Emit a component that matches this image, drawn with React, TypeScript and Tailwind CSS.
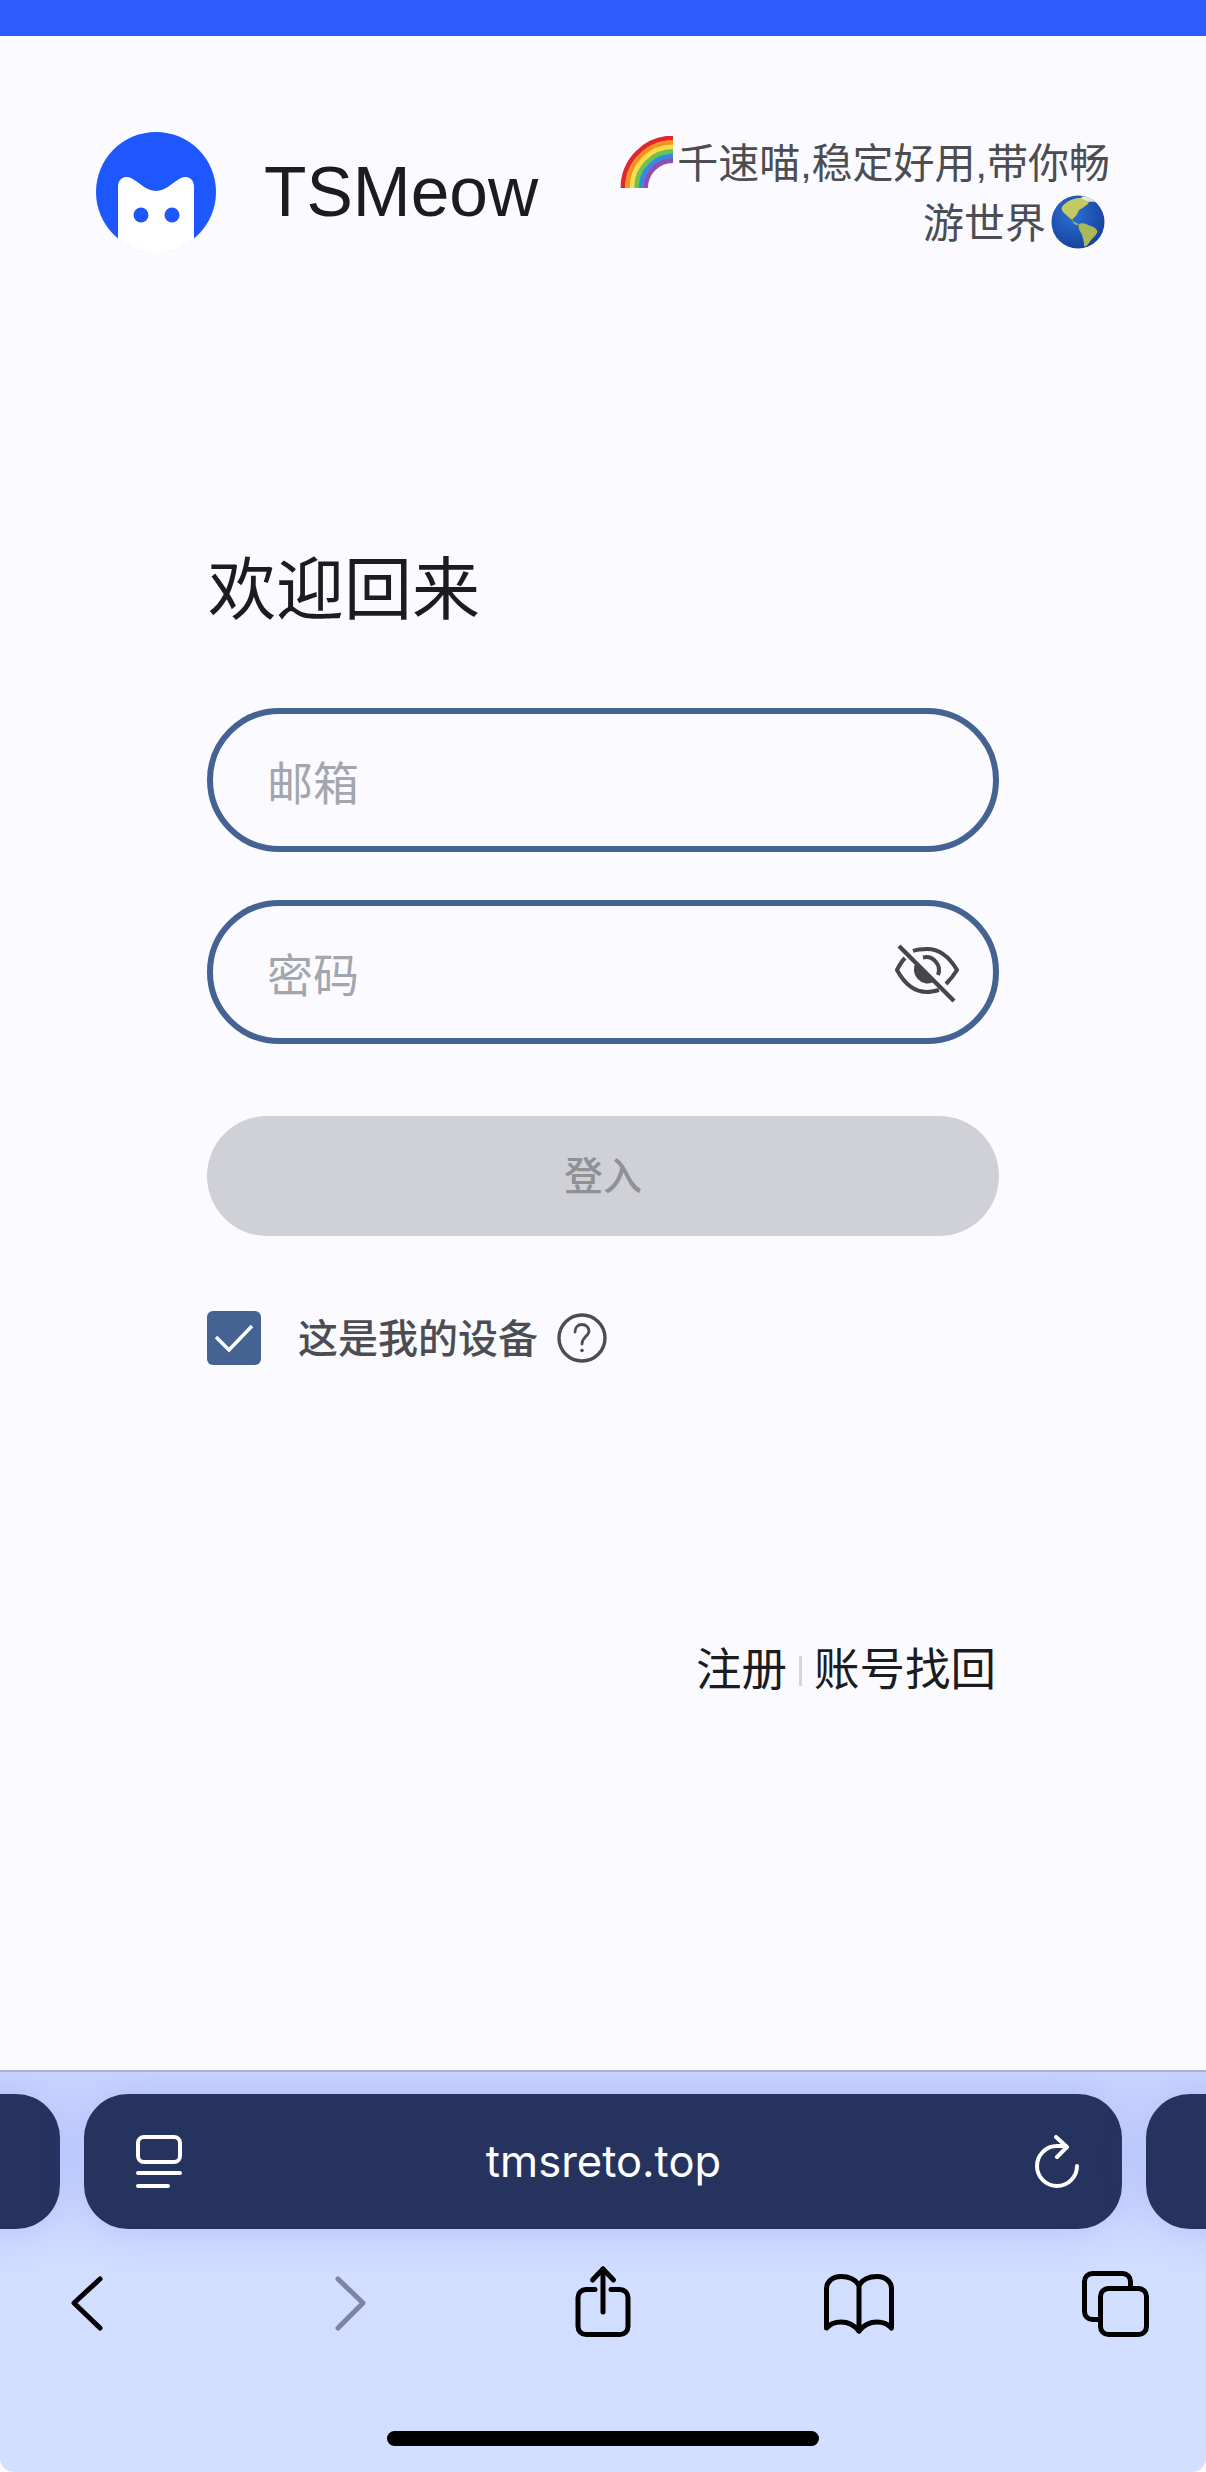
import type { ReactNode } from "react";

const rainbowBands = [
    { r: 50, color: "#e3262e" },
    { r: 45.5, color: "#f6921e" },
    { r: 41, color: "#fbdc4a" },
    { r: 36.5, color: "#6fc34c" },
    { r: 32, color: "#2f8fdc" },
    { r: 27.5, color: "#8b50b8" },
];

function Logo() {
    return (
        <svg width="120" height="120" viewBox="0 0 120 120" className="shrink-0">
            <defs>
                <clipPath id="logo-clip">
                    <circle cx="60" cy="60" r="60.6" />
                </clipPath>
            </defs>
            <circle cx="60" cy="60" r="60" fill="#1f57ff" />
            <path
                clipPath="url(#logo-clip)"
                fill="#fff"
                d="M22 121 V55 C22 47 28 43 35 46 C43 50 50 59 60 59 C70 59 77 50 85 46 C92 43 98 47 98 55 V121 Z"
            />
            <circle cx="45" cy="83" r="7.5" fill="#1f57ff" />
            <circle cx="76" cy="83" r="7.5" fill="#1f57ff" />
        </svg>
    );
}

function Rainbow() {
    return (
        <svg width="54" height="52" viewBox="0 0 54 52" className="mr-[4px] shrink-0">
            {rainbowBands.map((band) => (
                <path
                    key={band.color}
                    d={`M${54 - band.r} 52 A${band.r} ${band.r} 0 0 1 54 ${52 - band.r}`}
                    fill="none"
                    stroke={band.color}
                    strokeWidth="4.8"
                />
            ))}
        </svg>
    );
}

function Globe() {
    return (
        <svg width="54" height="54" viewBox="0 0 54 54" className="ml-[5px] shrink-0">
            <defs>
                <radialGradient id="globe-sea" cx="40%" cy="35%" r="70%">
                    <stop offset="0%" stopColor="#2a72d6" />
                    <stop offset="100%" stopColor="#173f9a" />
                </radialGradient>
                <clipPath id="globe-clip">
                    <circle cx="27" cy="27" r="26.5" />
                </clipPath>
            </defs>
            <circle cx="27" cy="27" r="26.5" fill="url(#globe-sea)" />
            <g clipPath="url(#globe-clip)">
                <path d="M11 12 C16 5 26 2 36 3 C40 5 38 9 34 11 C31 14 28 14 27 17 C26 21 23 22 21 25 C18 22 15 20 13 18 C11 16 10 14 11 12 Z" fill="#c4ca62" />
                <path d="M21 25 C23 27 25 28 28 29 L27 30 C24 30 22 28 21 25 Z" fill="#a9bb5a" />
                <path d="M28 29 C32 27 36 30 40 31 C45 33 47 35 46 38 C44 42 40 44 38 48 C36 51 34 52 33 51 C33 46 32 42 30 38 C28 35 27 32 28 29 Z" fill="#a9b95a" />
                <path d="M30 2 C35 0 41 2 45 6 C41 8 37 6 33 5 Z" fill="#dfe8dc" />
            </g>
        </svg>
    );
}

function EyeOffIcon() {
    return (
        <svg width="64" height="60" viewBox="0 0 64 60" fill="none" stroke="#45474c" strokeWidth="4">
            <path d="M18 8 C22 6.5 27 6 32 6 C45 6 55 15 62 27 C59 32 55 37 51 41" />
            <path d="M10 15 C7 18 4.5 22 2 27 C9 40 19 49 32 49 C36 49 40 48 44 47" />
            <path d="M28 14.5 A13 13 0 0 1 43 32" />
            <path d="M21 19 A14 14 0 0 0 39 39 Z" fill="#45474c" stroke="none" />
            <path d="M4 3 L59 58" strokeWidth="4.5" />
        </svg>
    );
}

function HelpIcon() {
    return (
        <svg width="50" height="50" viewBox="0 0 50 50" fill="none" stroke="#4b4d52" strokeWidth="3.4" strokeLinecap="round">
            <circle cx="25" cy="25" r="23" />
            <path d="M18 19 C18 14 21 11.5 25 11.5 C29 11.5 32 14.5 32 18 C32 23 25 24 25 31" strokeWidth="2.8" />
            <circle cx="25" cy="37.5" r="1.8" fill="#4b4d52" stroke="none" />
        </svg>
    );
}

function ToolIcon({ children }: { children: ReactNode }) {
    return (
        <svg width="100" height="100" viewBox="0 0 100 100" fill="none" stroke="#000" strokeWidth="5" strokeLinecap="round" strokeLinejoin="round">
            {children}
        </svg>
    );
}

function InputField({ placeholder, type, children }: { placeholder: string; type: string; children?: ReactNode }) {
    return (
        <div className="relative h-[144px] w-full rounded-[72px] border-[6px] border-[#446292]">
            <input
                type={type}
                placeholder={placeholder}
                className="h-full w-full bg-transparent pl-[54px] pr-[100px] pt-[8px] text-[46px] text-[#1a1c20] outline-none placeholder:text-[#a3a6ad]"
            />
            {children}
        </div>
    );
}

export default function App() {
    return (
        <div className="flex h-[2472px] w-[1206px] flex-col overflow-hidden bg-[#fafaff] font-['Liberation_Sans','Noto_Sans_CJK_SC',sans-serif]">
            <div className="h-[36px] bg-[#2f5bff]" />

            {/* Header */}
            <header className="flex items-center justify-between pl-[96px] pr-[96px] pt-[96px]">
                <div className="flex items-center gap-[48px]">
                    <Logo />
                    <span className="text-[69.5px] leading-[80px] text-[#1a1c20]">TSMeow</span>
                </div>
                <div className="text-[41px] leading-[60px] text-[#4b4d52]">
                    <div className="flex h-[60px] items-center justify-end">
                        <Rainbow />
                        <span className="pt-[4px]">千速喵,稳定好用,带你畅</span>
                    </div>
                    <div className="flex h-[60px] items-center justify-end pr-[5px]">
                        <span className="pt-[4px]">游世界</span>
                        <Globe />
                    </div>
                </div>
            </header>

            {/* Login form */}
            <main className="ml-[207px] w-[792px]">
                <h1 className="ml-[1px] mt-[298px] text-[68px] font-normal leading-[80px] text-[#1a1c20]">欢迎回来</h1>
                <div className="mt-[78px] flex flex-col gap-[48px]">
                    <InputField placeholder="邮箱" type="email" />
                    <InputField placeholder="密码" type="password">
                        <div className="absolute right-[34px] top-[37px]">
                            <EyeOffIcon />
                        </div>
                    </InputField>
                </div>
                <button className="mt-[72px] h-[120px] w-full rounded-[60px] bg-[#d0d1d6] pt-[2px] text-[39px] font-medium text-[#8f9196]">
                    登入
                </button>
                <div className="mt-[75px] flex h-[54px] items-center">
                    <span className="flex h-[54px] w-[54px] items-center justify-center rounded-[6px] bg-[#446292]">
                        <svg width="54" height="54" viewBox="0 0 54 54" fill="none" stroke="#fff" strokeWidth="3.5">
                            <path d="M9 26 L22 39 L45 15" />
                        </svg>
                    </span>
                    <span className="ml-[37px] pt-[2px] text-[40px] font-medium leading-[54px] text-[#4b4d52]">这是我的设备</span>
                    <span className="ml-[19px]">
                        <HelpIcon />
                    </span>
                </div>
                <div className="mt-[276px] flex items-center justify-end pr-[3px] text-[45.5px] leading-[60px] text-[#1a1c20]">
                    <span>注册</span>
                    <span className="mx-[12px] h-[30px] w-[3px] bg-[#d5d6da]" />
                    <span>账号找回</span>
                </div>
            </main>

            {/* Browser toolbar */}
            <footer className="mt-auto flex h-[402px] flex-col overflow-hidden rounded-b-[14px] border-t-2 border-[#a9b3d6] bg-gradient-to-b from-[#c9d5ff] via-[#d2deff] via-50% to-[#d3dfff]">
                <div className="mt-[22px] flex justify-center gap-[24px]">
                    <div className="h-[135px] w-[1038px] shrink-0 rounded-[44px] bg-[#26335f] shadow-[0_0_40px_rgba(90,110,230,0.25)]" />
                    <div className="grid h-[135px] w-[1038px] shrink-0 grid-cols-[1fr_auto_1fr] items-center rounded-[44px] bg-[#26335f] pl-[52px] pr-[43px] shadow-[0_0_40px_rgba(90,110,230,0.25)]">
                        <svg width="46" height="54" viewBox="0 0 46 54" fill="none" stroke="#fff" strokeWidth="4" strokeLinecap="round" className="justify-self-start">
                            <rect x="2" y="2" width="42" height="25" rx="6" />
                            <path d="M2 38 H44" />
                            <path d="M2 51 H32" />
                        </svg>
                        <span className="mr-[8px] font-['Inter',sans-serif] text-[43.5px] text-white">tmsreto.top</span>
                        <svg width="44" height="54" viewBox="0 0 44 54" fill="none" stroke="#fff" strokeWidth="4" strokeLinecap="round" strokeLinejoin="round" className="justify-self-end">
                            <path d="M42 31 A20 20 0 1 1 22 11 L30 11" />
                            <path d="M21 2 L32 12 L22 22" />
                        </svg>
                    </div>
                    <div className="h-[135px] w-[1038px] shrink-0 rounded-[44px] bg-[#26335f] shadow-[0_0_40px_rgba(90,110,230,0.25)]" />
                </div>

                <nav className="mt-[24px] flex justify-between px-[37px]">
                    <ToolIcon>
                        <path d="M63 26 L37 50 L63 75" />
                    </ToolIcon>
                    <ToolIcon>
                        <path d="M43 26 L68 50 L43 75" stroke="#7b84a3" />
                    </ToolIcon>
                    <ToolIcon>
                        <path d="M42 36.5 H33 a8 8 0 0 0 -8 8 V73.5 a8 8 0 0 0 8 8 H67 a8 8 0 0 0 8 -8 V44.5 a8 8 0 0 0 -8 -8 H58" />
                        <path d="M50 16 V59" />
                        <path d="M39.5 27 L50 16 L60.5 27" />
                    </ToolIcon>
                    <ToolIcon>
                        <path d="M48 32 C44 26 37 23.5 30 23.5 C21 23.5 15.5 29 15.5 36 V75 C19 71 24 69 30 69 C38 69 44 73 48 78 C52 73 58 69 66 69 C72 69 77 71 80.5 75 V36 C80.5 29 75 23.5 66 23.5 C59 23.5 52 26 48 32 Z" />
                        <path d="M48 32 V78" />
                    </ToolIcon>
                    <ToolIcon>
                        <rect x="31.5" y="35.5" width="46" height="46" rx="8" />
                        <path d="M61.5 33 V28.5 a8 8 0 0 0 -8 -8 H23.5 a8 8 0 0 0 -8 8 V58.5 a8 8 0 0 0 8 8 H29" />
                    </ToolIcon>
                </nav>

                <div className="mx-auto mt-[78px] h-[15px] w-[432px] rounded-full bg-black" />
            </footer>
        </div>
    );
}
